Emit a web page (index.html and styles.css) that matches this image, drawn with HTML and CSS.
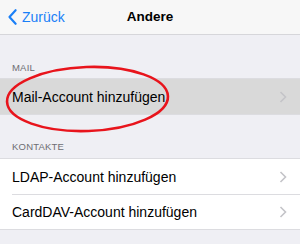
FILE: index.html
```html
<!DOCTYPE html>
<html lang="de">
<head>
<meta charset="utf-8">
<link rel="stylesheet" href="styles.css">
</head>
<body>
<div class="screen">
  <header class="nav">
    <a class="back">
      <svg class="back-chev" width="9" height="16" viewBox="0 0 9 16"><path d="M7.6 1.2 L1.5 8 L7.6 14.8" fill="none" stroke="#1a7ff7" stroke-width="2.1" stroke-linecap="round" stroke-linejoin="round"/></svg>
      <span>Zurück</span>
    </a>
    <h1 class="title">Andere</h1>
  </header>
  <section class="group">
    <div class="group-head">MAIL</div>
    <ul class="list">
      <li class="row selected"><span>Mail-Account hinzufügen</span><svg class="chev" width="8" height="12" viewBox="0 0 8 12"><path d="M1.5 1 L6.5 6 L1.5 11" fill="none" stroke="#c4c4c8" stroke-width="1.6"/></svg></li>
    </ul>
  </section>
  <section class="group">
    <div class="group-head">KONTAKTE</div>
    <ul class="list">
      <li class="row"><span>LDAP-Account hinzufügen</span><svg class="chev" width="8" height="12" viewBox="0 0 8 12"><path d="M1.5 1 L6.5 6 L1.5 11" fill="none" stroke="#c4c4c8" stroke-width="1.6"/></svg></li>
      <li class="row"><span>CardDAV-Account hinzufügen</span><svg class="chev" width="8" height="12" viewBox="0 0 8 12"><path d="M1.5 1 L6.5 6 L1.5 11" fill="none" stroke="#c4c4c8" stroke-width="1.6"/></svg></li>
    </ul>
  </section>
  <svg class="circle" width="300" height="244" viewBox="0 0 300 244"><ellipse cx="87.5" cy="99" rx="80.5" ry="32" transform="rotate(-2 87.5 99)" fill="none" stroke="#e8141c" stroke-width="2.6"/></svg>
</div>
</body>
</html>
```
FILE: styles.css
```css
* { box-sizing: border-box; }
html, body { margin: 0; padding: 0; }
body {
  width: 300px;
  height: 244px;
  overflow: hidden;
  background: #efeff4;
  font-family: "Liberation Sans", Arial, sans-serif;
  color: #000;
}
.screen { position: relative; width: 300px; height: 244px; }
.nav {
  height: 35px;
  background: #f7f7f7;
  border-bottom: 1px solid #d6d6da;
  display: flex;
  align-items: center;
  position: relative;
}
.back {
  display: flex;
  align-items: center;
  gap: 5px;
  padding-left: 8px;
  color: #1a7ff7;
  font-size: 14px;
  margin-top: -1px;
}
.back-chev { display: block; }
.title {
  position: absolute;
  left: 0; right: 0; top: 0;
  line-height: 34px;
  margin: 0;
  text-align: center;
  font-size: 13.5px;
  font-weight: bold;
  pointer-events: none;
}
.group { margin: 0; }
.group-head {
  padding: 27px 12px 0;
  height: 43px;
  font-size: 9.5px;
  line-height: 11px;
  color: #6d6d72;
  letter-spacing: 0.2px;
}
.group + .group .group-head { padding-top: 26px; }
.list {
  list-style: none;
  margin: 0;
  padding: 0;
  background: #fff;
  border-top: 1px solid #dcdce0;
  border-bottom: 1px solid #dcdce0;
}
.row {
  height: 35px;
  display: flex;
  align-items: center;
  justify-content: space-between;
  padding: 0 12px;
  font-size: 14px;
  position: relative;
}
.row + .row::before {
  content: "";
  position: absolute;
  left: 12px; right: 0; top: 0;
  border-top: 1px solid #dcdce0;
}
.row.selected { background: #d9d9d9; }
.chev { display: block; margin-right: 1px; }
.circle { position: absolute; left: 0; top: 0; pointer-events: none; }
```
